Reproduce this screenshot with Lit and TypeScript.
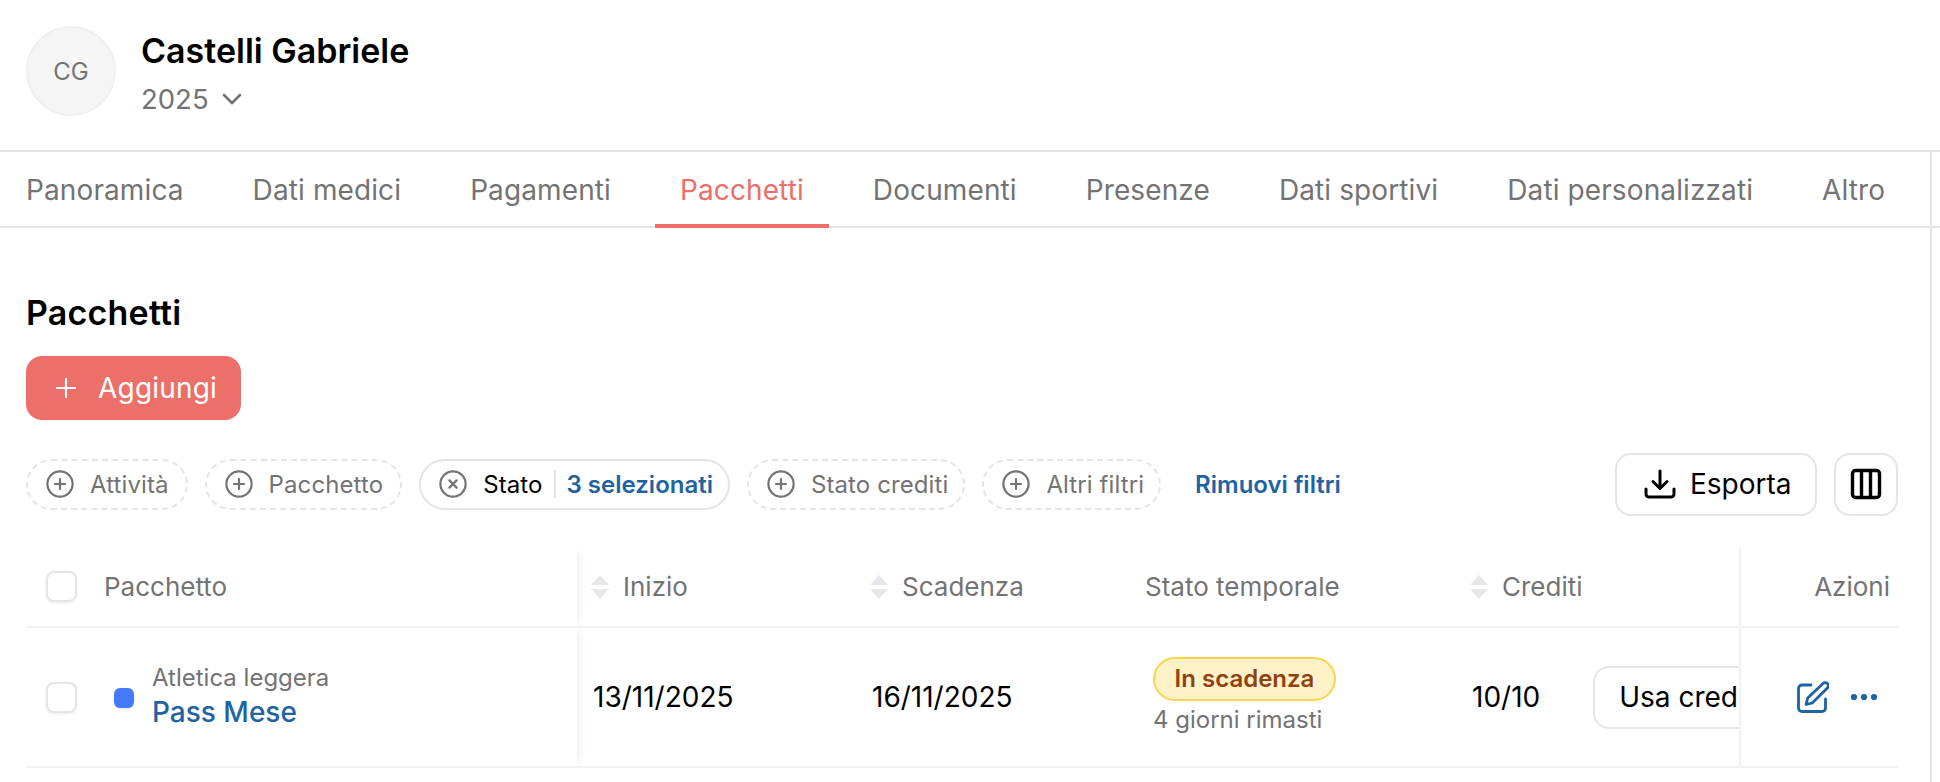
import { LitElement, html, css } from "lit";
import { customElement } from "lit/decorators.js";

const plusCircle = html`<svg class="ci" viewBox="0 0 28 28" fill="none" stroke="#737373" stroke-width="2.2" stroke-linecap="round"><circle cx="14" cy="14" r="12.6"/><path d="M14 9v10M9 14h10"/></svg>`;
const xCircle = html`<svg class="ci" viewBox="0 0 28 28" fill="none" stroke="#737373" stroke-width="2.2" stroke-linecap="round"><circle cx="14" cy="14" r="12.6"/><path d="M10.4 10.4l7.2 7.2M17.6 10.4l-7.2 7.2"/></svg>`;
const sort = html`<svg class="sort" viewBox="0 0 18 24" fill="#e5e7eb"><path d="M9 0l9 10H0zM9 24L0 14h18z"/></svg>`;

@customElement("app-root")
export class AppRoot extends LitElement {
  static styles = css`
    :host { display: block; width: 1940px; height: 782px; overflow: hidden; background: #fff; font-family: Inter, "Liberation Sans", sans-serif; color: #000; }
    * { box-sizing: border-box; }
    .head { height: 150px; padding: 26px 26px 0; display: flex; gap: 25px; align-items: flex-start; }
    .avatar { width: 90px; height: 90px; border-radius: 50%; background: #f5f5f5; border: 2px solid #f0f0f0; color: #737373; font-size: 24px; display: flex; align-items: center; justify-content: center; }
    .who { display: flex; flex-direction: column; }
    .name { font-size: 34px; font-weight: 600; line-height: 40px; margin-top: 5px; }
    .year { margin-top: 8px; display: flex; align-items: center; gap: 13px; font-size: 27.5px; line-height: 40px; color: #737373; }
    .year svg { width: 20px; height: 12px; }
    .body { display: flex; border-top: 2px solid #e5e5e5; height: 632px; }
    .main { width: 1932px; flex: none; border-right: 2px solid #e5e5e5; }
    .gutter { flex: 1; height: 76px; border-bottom: 2px solid #e5e5e5; }
    .tabs { height: 76px; border-bottom: 2px solid #e5e5e5; display: flex; padding-left: 1px; }
    .tab { padding: 4px 25px 0; margin-right: 19px; height: 76px; font-size: 28px; letter-spacing: 0.11px; color: #737373; display: flex; align-items: center; border-bottom: 4px solid transparent; white-space: nowrap; }
    .tab:last-child { margin-right: 0; }
    .tab.on { color: #ed6f69; border-bottom-color: #ed6f69; }
    .panel { padding: 0 32px 0 26px; }
    h2 { margin: 0; padding-top: 65px; font-size: 34px; font-weight: 600; line-height: 40px; letter-spacing: 0.2px; }
    .add { margin-top: 23px; width: 215px; height: 64px; border-radius: 16px; background: #ed6f69; color: #fff; font-size: 28px; letter-spacing: 0.2px; display: flex; align-items: center; gap: 22px; padding-left: 30px; }
    .add svg { width: 20px; height: 20px; }
    .bar { margin-top: 33px; height: 62px; display: flex; align-items: center; gap: 17px; }
    .chip { height: 51px; border: 2px dashed #e5e5e5; border-radius: 26px; padding: 0 17px 0 18px; display: flex; align-items: center; gap: 16px; font-size: 24px; letter-spacing: 0.1px; color: #737373; white-space: nowrap; }
    .chip.tight { padding-right: 15px; }
    .chip.set { border-style: solid; color: #000; }
    .ci { width: 28px; height: 28px; flex: none; }
    .sep { width: 2px; height: 28px; background: #e5e5e5; margin: 0 -5px; }
    .blue { color: #1f63a3; font-weight: 600; letter-spacing: 0; }
    .clear { margin-left: 17px; font-size: 24px; white-space: nowrap; }
    .right { margin-left: auto; display: flex; gap: 17px; }
    .btn { height: 63px; border: 2px solid #e5e5e5; border-radius: 16px; background: #fff; display: flex; align-items: center; font-size: 28px; white-space: nowrap; }
    .export { width: 202px; padding-left: 27px; gap: 14px; }
    .export svg, .cols svg { width: 32px; height: 32px; }
    .cols { width: 64px; justify-content: center; }
    .table { margin-top: 32px; display: flex; flex-direction: column; }
    .row { display: grid; grid-template-columns: 67px 484px 279px 281px 319px 283px 1fr; border-bottom: 2px solid #f2f2f2; }
    .r1 { height: 81px; }
    .r2 { height: 140px; }
    .c { display: flex; align-items: center; padding-left: 16px; min-width: 0; overflow: hidden; font-size: 28px; white-space: nowrap; }
    .r1 .c { color: #737373; font-size: 26px; gap: 14px; padding-left: 14px; }
    .row .c.plain { padding-left: 8px; }
    .row .c.chk { padding: 0 0 0 20px; overflow: visible; }
    .chk i { width: 31px; height: 31px; border: 2px solid #e5e5e5; border-radius: 8px; display: block; box-shadow: 0 1px 3px rgba(0,0,0,.08); }
    .first { box-shadow: 6px 0 8px -4px rgba(0,0,0,.07), -2px 0 4px -3px rgba(0,0,0,.03); position: relative; clip-path: inset(0 -14px 0 -4px); overflow: visible; }
    .r1 .c.first { padding-left: 11px; }
    .r2 .c.first { padding-left: 21px; gap: 18px; }
    .dot { width: 20px; height: 20px; border-radius: 6px; background: #4479fa; margin-top: 2px; box-shadow: 0 1px 3px rgba(0,0,0,.1); }
    .st { display: flex; flex-direction: column; }
    .sub { font-size: 24px; line-height: 30px; color: #737373; }
    .link { font-size: 28px; line-height: 38px; color: #1f63a3; font-weight: 500; }
    .sort { width: 18px; height: 24px; flex: none; }
    .badge { height: 44px; width: 183px; border: 2px solid #fcd34d; background: #fef3c7; border-radius: 22px; color: #92400e; font-weight: 600; font-size: 24px; display: flex; align-items: center; justify-content: center; }
    .status { flex-direction: column; align-items: flex-start; justify-content: center; padding-bottom: 3px; }
    .status .sub { margin-top: 4px; }
    .use { margin-left: 53px; flex: none; height: 63px; border: 2px solid #e5e5e5; border-radius: 16px; padding: 0 24px; display: flex; align-items: center; font-size: 28px; }
    .act { border-left: 2px solid #f2f2f2; overflow: visible; }
    .r1 .c.act { justify-content: flex-end; padding-right: 8px; }
    .r2 .c.act { justify-content: flex-end; padding-right: 20px; gap: 21px; }
    .act svg.e { width: 32px; height: 32px; }
    .act svg.d { width: 28px; height: 8px; }
  `;

  render() {
    const tabs = ["Panoramica", "Dati medici", "Pagamenti", "Pacchetti", "Documenti", "Presenze", "Dati sportivi", "Dati personalizzati", "Altro"];
    return html`
      <div class="head">
        <div class="avatar">CG</div>
        <div class="who">
          <div class="name">Castelli Gabriele</div>
          <div class="year">2025
            <svg viewBox="0 0 20 12" fill="none" stroke="#737373" stroke-width="2.6" stroke-linecap="round" stroke-linejoin="round"><path d="M2 2l8 8 8-8"/></svg>
          </div>
        </div>
      </div>
      <div class="body">
        <div class="main">
          <div class="tabs">
            ${tabs.map((t) => html`<div class="tab ${t === "Pacchetti" ? "on" : ""}">${t}</div>`)}
          </div>
          <div class="panel">
            <h2>Pacchetti</h2>
            <div class="add">
              <svg viewBox="0 0 20 20" fill="none" stroke="#fff" stroke-width="2.2" stroke-linecap="round"><path d="M10 1v18M1 10h18"/></svg>
              Aggiungi
            </div>
            <div class="bar">
              <div class="chip">${plusCircle}Attività</div>
              <div class="chip">${plusCircle}Pacchetto</div>
              <div class="chip set tight">${xCircle}Stato<span class="sep"></span><span class="blue">3 selezionati</span></div>
              <div class="chip tight">${plusCircle}Stato crediti</div>
              <div class="chip tight">${plusCircle}Altri filtri</div>
              <div class="clear blue">Rimuovi filtri</div>
              <div class="right">
                <div class="btn export">
                  <svg viewBox="0 0 32 32" fill="none" stroke="#000" stroke-width="3" stroke-linecap="round" stroke-linejoin="round"><path d="M16 3v17M9 13.5l7 7 7-7M2 21v5a3 3 0 0 0 3 3h22a3 3 0 0 0 3-3v-5"/></svg>
                  Esporta
                </div>
                <div class="btn cols">
                  <svg viewBox="0 0 32 32" fill="none" stroke="#000" stroke-width="3.400" stroke-linejoin="round"><rect x="2.500" y="2.500" width="27" height="27" rx="3"/><path d="M11.500 2.500v27M20.500 2.500v27"/></svg>
                </div>
              </div>
            </div>
            <div class="table">
              <div class="row r1">
                <div class="c chk"><i></i></div>
                <div class="c first">Pacchetto</div>
                <div class="c">${sort}Inizio</div>
                <div class="c">${sort}Scadenza</div>
                <div class="c plain">Stato temporale</div>
                <div class="c">${sort}Crediti</div>
                <div class="c act">Azioni</div>
              </div>
              <div class="row r2">
                <div class="c chk"><i></i></div>
                <div class="c first">
                  <span class="dot"></span>
                  <div class="st"><span class="sub">Atletica leggera</span><span class="link">Pass Mese</span></div>
                </div>
                <div class="c">13/11/2025</div>
                <div class="c">16/11/2025</div>
                <div class="c status"><div class="badge">In scadenza</div><div class="sub">4 giorni rimasti</div></div>
                <div class="c">10/10<div class="use">Usa credito</div></div>
                <div class="c act">
                  <svg class="e" viewBox="0 0 32 32" fill="none" stroke="#1f63a3" stroke-width="2.800" stroke-linecap="round" stroke-linejoin="round"><path d="M14 4H5a3.500 3.500 0 0 0-3.500 3.500V27A3.500 3.500 0 0 0 5 30.500h20a3.500 3.500 0 0 0 3.500-3.500V18"/><path d="M26 2.500a3.100 3.100 0 0 1 4.400 4.400L15.500 21.800l-6.500 1.700 1.700-6.500z"/></svg>
                  <svg class="d" viewBox="0 0 28 8" fill="#1f63a3"><circle cx="4" cy="4" r="3.100"/><circle cx="14" cy="4" r="3.100"/><circle cx="24" cy="4" r="3.100"/></svg>
                </div>
              </div>
            </div>
          </div>
        </div>
        <div class="gutter"></div>
      </div>
    `;
  }
}
